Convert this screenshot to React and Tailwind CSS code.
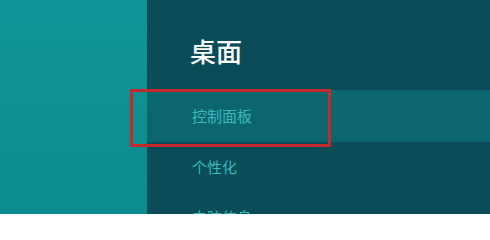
import React from "react";

// Windows 8 settings charm, desktop section
const items = [
  { label: "控制面板", active: true, height: "h-[52px]" },
  { label: "个性化", active: false, height: "h-[50px]" },
  { label: "电脑信息", active: false, height: "h-[50px]" },
];

const App = () => {
  return (
    <div
      className="relative flex w-[490px] h-[214px] overflow-hidden"
      style={{ fontFamily: '"Noto Sans CJK SC", "Noto Sans", sans-serif' }}
    >
      <div className="w-[147px] shrink-0 bg-gradient-to-b from-[#0f9597] to-[#0b8b8d]" />

      <div className="flex-1 bg-[#0a4d58]">
        <h1 className="pt-[36px] pl-[43px] mb-[24px] text-[26px] leading-[30px] font-medium text-white">
          桌面
        </h1>
        <div>
          {items.map((item) => (
            <div
              key={item.label}
              className={
                "flex items-center pl-[45px] text-[15px] text-[#3cb8bb] " +
                item.height +
                (item.active ? " bg-[#0c6670]" : "")
              }
            >
              {item.label}
            </div>
          ))}
        </div>
      </div>

      {/* red annotation box */}
      <div className="absolute left-[130px] top-[89px] w-[201px] h-[58px] border-[3px] border-[#c42a2c]" />
    </div>
  );
};

export default App;
